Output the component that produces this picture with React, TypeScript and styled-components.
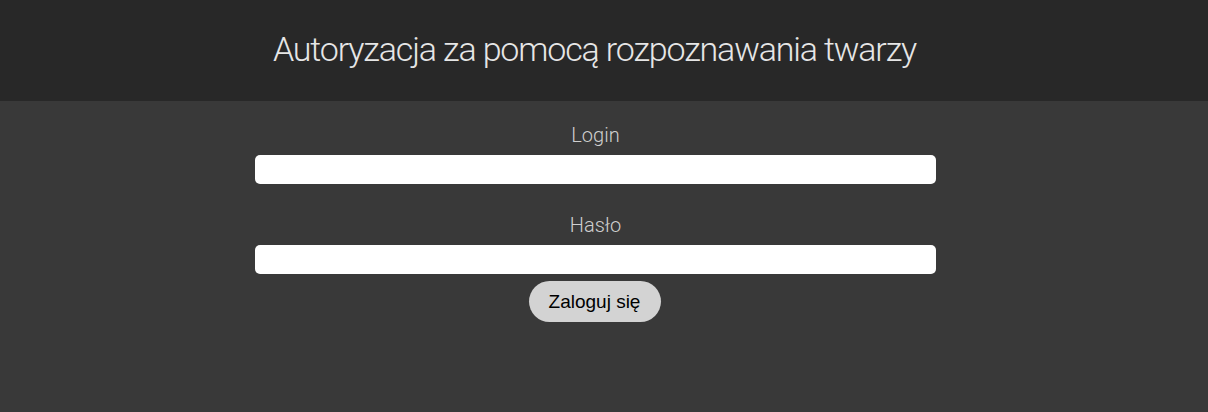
import React from "react";
import styled, { createGlobalStyle } from "styled-components";

const Global = createGlobalStyle`
  html, body { margin: 0; padding: 0; background: #393939; }
  body { font-family: Roboto, "Noto Sans", sans-serif; }
  * { box-sizing: border-box; }
`;

const Page = styled.div`
  min-height: 412px;
  background: #393939;
`;

const Header = styled.header`
  background: #282828;
  height: 101px;
  display: flex;
  align-items: center;
  justify-content: center;
  padding-right: 19px;
`;

const Title = styled.h1`
  margin: 0;
  font-family: Roboto, sans-serif;
  font-weight: 300;
  font-size: 34px;
  letter-spacing: -1.15px;
  color: #e6e6e6;
  padding-bottom: 4px;
`;

const Form = styled.form`
  display: flex;
  flex-direction: column;
  align-items: center;
  padding: 20px 17px 0 0;
`;

const Field = styled.div<{ $gap: number }>`
  display: flex;
  flex-direction: column;
  align-items: center;
  margin-bottom: ${(p) => p.$gap}px;
`;

const Label = styled.label`
  font-family: Roboto, sans-serif;
  font-weight: 300;
  font-size: 20px;
  line-height: 28px;
  color: #cfcfcf;
  margin-bottom: 6px;
`;

const Input = styled.input`
  width: 681px;
  height: 29px;
  border: none;
  border-radius: 5px;
  background: #ffffff;
  outline: none;
`;

const Button = styled.button`
  width: 132px;
  height: 41px;
  margin-right: 2px;
  border: none;
  border-radius: 21px;
  background: #d3d3d3;
  color: #000;
  font-family: "Liberation Sans", Arial, sans-serif;
  font-size: 19px;
  padding: 0;
  cursor: pointer;
`;

export default function App() {
  return (
    <Page>
      <Global />
      <Header>
        <Title>Autoryzacja za pomocą rozpoznawania twarzy</Title>
      </Header>
      <Form onSubmit={(e) => e.preventDefault()}>
        <Field $gap={27}>
          <Label>Login</Label>
          <Input type="text" />
        </Field>
        <Field $gap={7}>
          <Label>Hasło</Label>
          <Input type="password" />
        </Field>
        <Button type="submit">Zaloguj się</Button>
      </Form>
    </Page>
  );
}
